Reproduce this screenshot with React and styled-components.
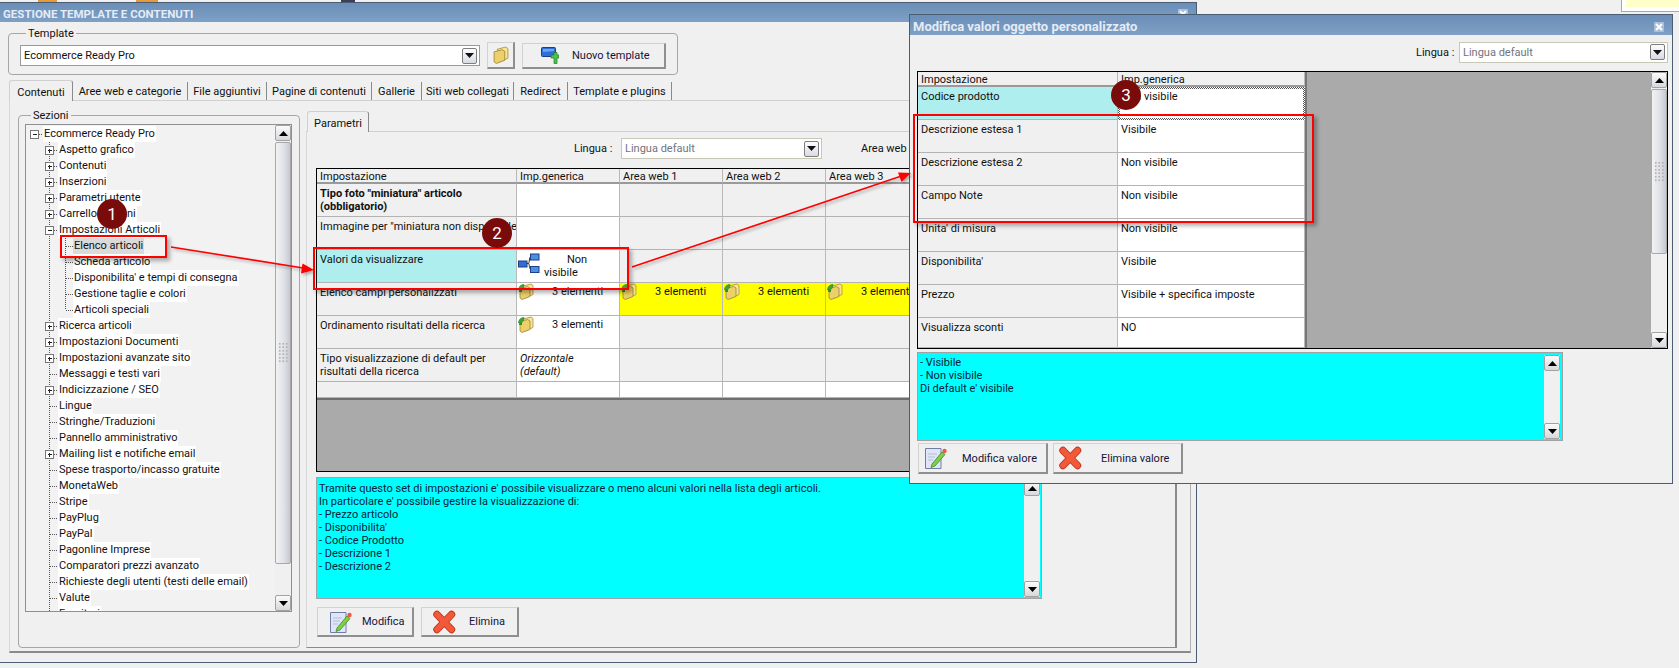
import React from "react";
import styled, { createGlobalStyle } from "styled-components";

const Global = createGlobalStyle`
  html, body { margin: 0; padding: 0; background: #f0f0f0; overflow: hidden; }
  #root { width: 1679px; height: 668px; }
  * { box-sizing: border-box; }
`;

const FONT = `Roboto, "Liberation Sans", Arial, sans-serif`;

const Desktop = styled.div`
  position: relative; width: 1679px; height: 668px; overflow: hidden;
  background: #f0f0f0; color: #111; font: 11px/13px ${FONT};
`;
const TopBit = styled.div`
  position: absolute; top: 0; height: 2px; left: ${p => p.$x}px; width: ${p => p.$w}px; background: ${p => p.$c};
`;
const NoteCorner = styled.div`
  position: absolute; left: 1621px; top: -1px; width: 60px; height: 13px;
  background: #fff; border: 1px solid #a8a8a8; padding: 0 0 4px 4px;
`;
const NoteFill = styled.div` height: 100%; background: #ffffc8; `;

const Window = styled.section`
  position: absolute; display: flex; flex-direction: column;
  left: ${p => p.$x}px; top: ${p => p.$y}px; width: ${p => p.$w}px; height: ${p => p.$h}px;
  background: #f0f0f0; border: 1px solid #4b5d72;
`;
const TitleBar = styled.header`
  flex: none; display: flex; align-items: center; justify-content: space-between;
  height: ${p => p.$h}px; padding: ${p => p.$pt}px ${p => p.$pr}px 0 ${p => p.$pl}px;
  background: linear-gradient(#6a8eb7, #7fa0c6); color: #e4ecf6; font-weight: bold;
  font-size: ${p => p.$size}px; white-space: nowrap;
`;
const CloseBox = styled.span`
  display: flex; align-items: center; justify-content: center; width: 10px; height: 10px;
  background: #a9bfd9; color: #fff;
`;

const Fieldset = styled.fieldset`
  margin: 0; min-width: 0; border: 1px solid #a6a6a6; border-radius: 4px;
`;
const Legend = styled.legend` padding: 0 2px; margin-left: 6px; line-height: 13px; `;

const TemplateBox = styled(Fieldset)`
  flex: none; display: flex; align-items: center; gap: 7px;
  margin: 5px 0 0 8px; width: 670px; height: 48px; padding: 2px 0 5px 11px;
`;
const Combo = styled.div`
  flex: none; display: flex; align-items: center; justify-content: space-between;
  width: ${p => p.$w}px; height: ${p => p.$h}px; padding: 0 2px 0 ${p => p.$pl || 3}px;
  background: #fff; border: 1px solid ${p => p.$muted ? "#c8c8b8" : "#9a9a9a"};
  color: ${p => p.$muted ? "#6f7480" : "#111"};
`;
const ComboArrow = styled.span`
  display: flex; align-items: center; justify-content: center; width: 15px; height: 16px;
  background: linear-gradient(#fdfdfd, #d9dbe2); border: 1px solid #7d7d7d; border-radius: 2px; color: #111;
`;
const ToolButton = styled.button`
  flex: none; display: flex; align-items: center; margin: 0;
  width: ${p => p.$w}px; height: ${p => p.$h}px; padding: 0 0 0 ${p => p.$pl}px; gap: ${p => p.$gap}px;
  font: inherit; color: #14143a; background: #f0f0f0;
  border: 1px solid; border-color: #d2d2d2 #8f8f8f #8f8f8f #d2d2d2; border-right-width: 2px; border-bottom-width: 2px;
`;
const Tabs = styled.nav`
  flex: none; display: flex; height: 20px; margin: ${p => p.$mt}px 0 0 ${p => p.$ml}px; position: relative; z-index: 1;
`;
const Tab = styled.div`
  flex: none; display: flex; align-items: center; justify-content: center; width: ${p => p.$w}px;
  height: ${p => p.$active ? 21 : 18}px; margin-top: ${p => p.$active ? 0 : 2}px;
  background: #f0f0f0; white-space: nowrap; padding-top: ${p => p.$active ? 3 : 1}px;
  border-right: 1px solid #8a8a8a;
  ${p => p.$active && `border-left: 1px solid #d0d0d0; border-top: 1px solid #d0d0d0; border-radius: 3px 3px 0 0;`}
`;
const TabPage = styled.div`
  flex: none; display: flex; align-items: flex-start; margin-left: 9px;
  width: 1182px; height: 553px; padding: 8px 0 0 8px;
  border: 1px solid; border-color: #d0d0d0 #b0b0b0 #8a8a8a #d8d8d8; border-bottom-width: 2px;
`;
const SectionBox = styled(Fieldset)`
  flex: none; width: 282px; height: 539px; padding: 2px 7px 0 6px; display: block;
`;
const TreeBox = styled.div`
  display: flex; width: 267px; height: 488px; border: 1px solid #8f8f8f; background: #f2f2f2;
`;
const TreeList = styled.div` flex: 1; min-width: 0; overflow: hidden; padding-top: 1px; `;
const TreeRowEl = styled.div` display: flex; align-items: center; height: 16px; white-space: nowrap; `;
const TreeLabel = styled.span`
  padding: 0 1px; line-height: 16px; background: ${p => p.$selected ? "#dadada" : "#fff"};
`;
const Gutter = styled.svg` flex: none; display: block; `;

const ScrollTrack = styled.div`
  flex: none; display: flex; flex-direction: column; width: 16px; background: #f0f0f0;
  margin: ${p => p.$m || "0"};
`;
const ScrollButton = styled.div`
  flex: none; display: flex; align-items: center; justify-content: center; height: 16px;
  background: linear-gradient(#fbfbfb, #d7d8dc); border: 1px solid #a2a2a2; border-radius: 2px; color: #000;
`;
const ScrollMiddle = styled.div` flex: 1; min-height: 0; padding-top: 1px; `;
const ScrollThumb = styled.div`
  display: flex; align-items: center; justify-content: center; height: ${p => p.$h}px;
  background: linear-gradient(90deg, #f3f3f5, #dfe0e6 60%, #c6c8d2);
  border: 1px solid #a8a8a8; border-radius: 2px;
`;
const Grip = styled.div`
  width: 10px; height: 22px; background-image: radial-gradient(#b4b4b4 0.8px, transparent 1px); background-size: 3.5px 3.5px;
`;

const RightColumn = styled.div` flex: none; width: 871px; margin: 2px 0 0 6px; `;
const Panel = styled.div`
  height: 517px; padding: 6px 0 0 9px; display: flex; flex-direction: column; align-items: flex-start;
  border: 1px solid; border-color: #d0d0d0 #8a8a8a #8a8a8a #d8d8d8; border-right-width: 2px;
`;
const LanguageRow = styled.div`
  flex: none; display: flex; align-items: center; white-space: nowrap;
  height: ${p => p.$h}px; margin: 0 0 ${p => p.$mb}px ${p => p.$ml}px;
`;
const LanguageLabel = styled.span` flex: none; width: ${p => p.$w}px; `;
const AreaLabel = styled.span` flex: none; margin-left: 39px; `;

const GridFrame = styled.div`
  flex: none; display: flex; flex-direction: ${p => p.$row ? "row" : "column"};
  width: ${p => p.$w}px; height: ${p => p.$h}px; overflow: hidden;
  background: #aaa; border: 1px solid #000;
`;
const GridBody = styled.div`
  flex: none; background: #f0f0f0;
  ${p => p.$ruled && `border-bottom: 2px solid #6e6e6e;`}
  ${p => p.$sideRule && `border-right: 2px solid #777; overflow: hidden; width: 389px;`}
`;
const GridVoid = styled.div` flex: 1; min-width: 0; background: #aaa; `;
const GridRow = styled.div`
  display: grid; grid-template-columns: ${p => p.$cols}; height: ${p => p.$h}px;
`;
const TONES = { plain: "#f0f0f0", white: "#fff", yellow: "#ffff00", aqua: "#aeeeee", head: "#f0f0f0" };
const Cell = styled.div`
  min-width: 0; overflow: hidden; padding: ${p => p.$tone === "head" ? "1px" : "3px"} 3px 0;
  background: ${p => TONES[p.$tone || "plain"]};
  border-right: 1px solid #b9b9b9; border-bottom: 1px solid #b4b4b4;
  ${p => p.$tone === "head" && `border-bottom: 2px solid #9a9a9a;`}
  ${p => p.$bold && `font-weight: bold;`}
  ${p => p.$italic && `font-style: italic;`}
  ${p => p.$nowrap && `white-space: nowrap;`}
`;
const FocusCell = styled(Cell)`
  padding: 1px 1px 0;
  border: 2px solid transparent;
  background: linear-gradient(#fff, #fff) padding-box,
    repeating-conic-gradient(#555 0 25%, #fff 0 50%) 0 0 / 2px 2px border-box;
`;
const IconCell = styled(Cell)` display: flex; padding: 0 0 0 1px; align-items: flex-start; `;
const CountText = styled.span` margin: 2px 0 0 18px; white-space: nowrap; `;
const TreeValue = styled.span` margin: 3px 0 0 4px; text-indent: 23px; `;

const InfoBox = styled.div`
  flex: none; display: flex; justify-content: space-between;
  width: ${p => p.$w}px; height: ${p => p.$h}px; margin-top: ${p => p.$mt}px;
  padding: ${p => p.$pt}px 0 0 2px; background: #00ffff; border: 1px solid #a2a2a2; color: #07223a;
`;
const InfoText = styled.div` white-space: pre-line; `;
const ButtonRow = styled.div`
  flex: none; display: flex; gap: ${p => p.$gap}px; margin: ${p => p.$m};
`;
const ModalBody = styled.div`
  flex: 1; display: flex; flex-direction: column; align-items: flex-start; padding: 7px 0 0 7px;
`;

const RedBox = styled.div`
  position: absolute; left: ${p => p.$x}px; top: ${p => p.$y}px; width: ${p => p.$w}px; height: ${p => p.$h}px;
  border: 2px solid #f00; box-shadow: 3px 3px 4px rgba(0,0,0,.3); pointer-events: none;
`;
const Badge = styled.div`
  position: absolute; left: ${p => p.$x - 15}px; top: ${p => p.$y - 15}px; width: 30px; height: 30px;
  display: flex; align-items: center; justify-content: center; border-radius: 50%;
  background: #7a0b0b; color: #fff; font: 17px/1 ${FONT};
`;
const Arrows = styled.svg` position: absolute; left: 0; top: 0; pointer-events: none; `;

const Tri = ({ up }) => (
  <svg width="9" height="5" viewBox="0 0 9 5"><path d={up ? "M4.5 0L9 5H0Z" : "M0 0H9L4.5 5Z"} fill="currentColor" /></svg>
);

const Scrollbar = ({ thumb, margin }) => (
  <ScrollTrack $m={margin}>
    <ScrollButton><Tri up /></ScrollButton>
    <ScrollMiddle>{thumb ? <ScrollThumb $h={thumb}><Grip /></ScrollThumb> : null}</ScrollMiddle>
    <ScrollButton><Tri /></ScrollButton>
  </ScrollTrack>
);

const FolderIcon = ({ leaf, size = 16 }) => (
  <svg width={size} height={size + 1} viewBox="0 0 16 17" style={{ flex: "none", display: "block" }}>
    <path d="M5 3L13 1L15 2.5V11.5L7 15Z" fill="#f6e694" stroke="#a98f3c" strokeWidth=".8" />
    <path d="M2 5.5L9.5 3.5L12 5V13.5L4 16.5L2 15Z" fill="#ecd06a" stroke="#a08436" strokeWidth=".8" />
    {leaf && <path d="M.5 7C.5 3.5 3 1.5 6 1.5C6 5 4 7.5 .5 7Z" fill="#3fa535" stroke="#1f7a1f" strokeWidth=".5" />}
    {leaf && <path d="M1 9C1 7 2 6 4 6V9Z" fill="#2f8f2f" />}
  </svg>
);
const NetworkIcon = () => (
  <svg width="22" height="20" viewBox="0 0 22 20" style={{ flex: "none", display: "block", marginTop: 3 }}>
    <path d="M9 10.5H10.5C11.5 10.5 11 3.5 13 3.5M10.5 10.5C11.5 10.5 11 16.5 13 16.5" fill="none" stroke="#223" strokeWidth="1" />
    <rect x=".5" y="8" width="8.5" height="6" fill="#2d6fd0" stroke="#1c3f88" />
    <rect x="12.5" y="1" width="8.5" height="6" fill="#4d8fe0" stroke="#1c3f88" />
    <rect x="12.5" y="13.5" width="8.5" height="6" fill="#4d8fe0" stroke="#1c3f88" />
  </svg>
);
const NoteIcon = () => (
  <svg width="24" height="24" viewBox="0 0 24 24" style={{ flex: "none", display: "block" }}>
    <path d="M1.5 2.5H17V22.5H1.5Z" fill="#dfe5f5" stroke="#6f7ea8" />
    <path d="M4 8H13M4 11H11M4 14H9" stroke="#b4bdd8" strokeWidth="1.2" />
    <path d="M8 18L18 6L21 8.5L11 20L7 21.5Z" fill="#7ccf47" stroke="#3f8a2c" strokeWidth=".8" />
    <circle cx="20.5" cy="5" r="2.2" fill="#ea5a45" />
  </svg>
);
const CrossIcon = () => (
  <svg width="24" height="24" viewBox="0 0 24 24" style={{ flex: "none", display: "block" }}>
    <path d="M5 4.5L19.5 19.5M19.5 4.5L5 19.5" stroke="#c23418" strokeWidth="7.4" strokeLinecap="round" />
    <path d="M5 4.5L19.5 19.5M19.5 4.5L5 19.5" stroke="#f1593a" strokeWidth="5.6" strokeLinecap="round" />
  </svg>
);
const NewTemplateIcon = () => (
  <svg width="18" height="17" viewBox="0 0 18 17" style={{ flex: "none", display: "block" }}>
    <rect x=".5" y=".5" width="14" height="9" rx="1" fill="#2f6fd8" stroke="#1c3f88" />
    <path d="M2 2H13V4L2 5Z" fill="#6fa4ee" />
    <path d="M10 8H13V5.5H16V8H18V11H16V16.5H13V11H10Z" fill="#4cc24a" stroke="#237d25" strokeWidth=".7" />
  </svg>
);
const CloseGlyph = () => (
  <svg width="8" height="8" viewBox="0 0 8 8"><path d="M1 1L7 7M7 1L1 7" stroke="currentColor" strokeWidth="2" /></svg>
);

const TreeRow = ({ level = 1, kind = "leaf", last, selected, children }) => {
  const w = [17, 32, 47][level];
  const dash = { stroke: "#555", strokeWidth: 1, strokeDasharray: "1 1", shapeRendering: "crispEdges" };
  const cx = level === 0 ? 8.5 : 23.5;
  return (
    <TreeRowEl>
      <Gutter width={w} height="16" viewBox={`0 0 ${w} 16`}>
        {level >= 1 && <path d="M23.5 0V16" {...dash} />}
        {level === 2 && <path d={`M39.5 0V${last ? 8 : 16}M40 8.5H47`} {...dash} />}
        {level < 2 && <path d={`M${cx} 8.5H${w}`} {...dash} />}
        {kind !== "leaf" && (
          <g shapeRendering="crispEdges">
            <rect x={cx - 4} y="4.5" width="8" height="8" fill="#fff" stroke="#777" />
            <path d={`M${cx - 2} 8.5H${cx + 2}`} stroke="#222" />
            {kind === "plus" && <path d={`M${cx} 6.5V10.5`} stroke="#222" />}
          </g>
        )}
      </Gutter>
      <TreeLabel $selected={selected}>{children}</TreeLabel>
    </TreeRowEl>
  );
};

const TREE = [
  ["Aspetto grafico", "plus"], ["Contenuti", "plus"], ["Inserzioni", "plus"], ["Parametri utente", "plus"],
  ["Carrello e ordini", "plus"], ["Impostazioni Articoli", "minus"],
  ["Elenco articoli", "leaf", 2, true], ["Scheda articolo", "leaf", 2], ["Disponibilita' e tempi di consegna", "leaf", 2],
  ["Gestione taglie e colori", "leaf", 2], ["Articoli speciali", "leaf", 2, false, true],
  ["Ricerca articoli", "plus"], ["Impostazioni Documenti", "plus"], ["Impostazioni avanzate sito", "plus"],
  ["Messaggi e testi vari"], ["Indicizzazione / SEO", "plus"], ["Lingue"], ["Stringhe/Traduzioni"],
  ["Pannello amministrativo"], ["Mailing list e notifiche email", "plus"], ["Spese trasporto/incasso gratuite"],
  ["MonetaWeb"], ["Stripe"], ["PayPlug"], ["PayPal"], ["Pagonline Imprese"], ["Comparatori prezzi avanzato"],
  ["Richieste degli utenti (testi delle email)"], ["Valute"], ["Fornitori"],
];

const MAIN_COLS = "200px 103px 103px 103px 103px 103px";
const Counted = ({ tone }) => (
  <IconCell $tone={tone}><FolderIcon leaf /><CountText>3 elementi</CountText></IconCell>
);

const MainGrid = () => (
  <GridFrame $w={726} $h={304}>
    <GridBody $ruled>
      <GridRow $cols={MAIN_COLS} $h={15}>
        {["Impostazione", "Imp.generica", "Area web 1", "Area web 2", "Area web 3", "Area web 4"].map(t => <Cell key={t} $tone="head">{t}</Cell>)}
      </GridRow>
      <GridRow $cols={MAIN_COLS} $h={33}>
        <Cell $bold>Tipo foto "miniatura" articolo (obbligatorio)</Cell><Cell $tone="white" /><Cell /><Cell /><Cell /><Cell />
      </GridRow>
      <GridRow $cols={MAIN_COLS} $h={33}>
        <Cell $nowrap>Immagine per "miniatura non disponibile"</Cell><Cell $tone="white" /><Cell /><Cell /><Cell /><Cell />
      </GridRow>
      <GridRow $cols={MAIN_COLS} $h={33}>
        <Cell $tone="aqua">Valori da visualizzare</Cell>
        <IconCell $tone="white"><NetworkIcon /><TreeValue>Non<br />visibile</TreeValue></IconCell>
        <Cell /><Cell /><Cell /><Cell />
      </GridRow>
      <GridRow $cols={MAIN_COLS} $h={33}>
        <Cell>Elenco campi personalizzati</Cell>
        <Counted tone="white" /><Counted tone="yellow" /><Counted tone="yellow" /><Counted tone="yellow" /><Counted tone="yellow" />
      </GridRow>
      <GridRow $cols={MAIN_COLS} $h={33}>
        <Cell>Ordinamento risultati della ricerca</Cell><Counted tone="white" /><Cell /><Cell /><Cell /><Cell />
      </GridRow>
      <GridRow $cols={MAIN_COLS} $h={33}>
        <Cell>Tipo visualizzazione di default per risultati della ricerca</Cell>
        <Cell $tone="white" $italic>Orizzontale (default)</Cell><Cell /><Cell /><Cell /><Cell />
      </GridRow>
      <GridRow $cols={MAIN_COLS} $h={16}>
        <Cell /><Cell $tone="white" /><Cell $tone="white" /><Cell $tone="white" /><Cell $tone="white" /><Cell $tone="white" />
      </GridRow>
    </GridBody>
    <GridVoid />
  </GridFrame>
);

const MODAL_COLS = "200px 187px";
const MODAL_ROWS = [
  ["Descrizione estesa 1", "Visibile"], ["Descrizione estesa 2", "Non visibile"], ["Campo Note", "Non visibile"],
  ["Unita' di misura", "Non visibile"], ["Disponibilita'", "Visibile"], ["Prezzo", "Visibile + specifica imposte"],
];

const ModalGrid = () => (
  <GridFrame $row $w={751} $h={278}>
    <GridBody $sideRule>
      <GridRow $cols={MODAL_COLS} $h={15}><Cell $tone="head">Impostazione</Cell><Cell $tone="head">Imp.generica</Cell></GridRow>
      <GridRow $cols={MODAL_COLS} $h={33}><Cell $tone="aqua">Codice prodotto</Cell><FocusCell $tone="white">Non visibile</FocusCell></GridRow>
      {MODAL_ROWS.map(([a, b]) => (
        <GridRow key={a} $cols={MODAL_COLS} $h={33}><Cell>{a}</Cell><Cell $tone="white">{b}</Cell></GridRow>
      ))}
      <GridRow $cols={MODAL_COLS} $h={30}><Cell>Visualizza sconti</Cell><Cell $tone="white">NO</Cell></GridRow>
    </GridBody>
    <GridVoid />
    <Scrollbar thumb={165} />
  </GridFrame>
);

export default function App() {
  return (
    <Desktop>
      <Global />
      <TopBit $x={38} $w={19} $c="#e79a3c" />
      <TopBit $x={136} $w={22} $c="#e79a3c" />
      <TopBit $x={341} $w={14} $c="#3b3f55" />
      <NoteCorner><NoteFill /></NoteCorner>

      <Window $x={-1} $y={2} $w={1198} $h={661}>
        <TitleBar $h={19} $pt={3} $pl={3} $pr={8} $size={11.5}>
          GESTIONE TEMPLATE E CONTENUTI
          <CloseBox><CloseGlyph /></CloseBox>
        </TitleBar>
        <TemplateBox>
          <Legend>Template</Legend>
          <Combo $w={460} $h={21}>Ecommerce Ready Pro<ComboArrow><Tri /></ComboArrow></Combo>
          <ToolButton $w={28} $h={27} $pl={4} $gap={0}><FolderIcon size={17} /></ToolButton>
          <ToolButton $w={144} $h={26} $pl={18} $gap={13}><NewTemplateIcon />Nuovo template</ToolButton>
        </TemplateBox>
        <Tabs $mt={5} $ml={9}>
          <Tab $active $w={64}>Contenuti</Tab>
          <Tab $w={115}>Aree web e categorie</Tab>
          <Tab $w={79}>File aggiuntivi</Tab>
          <Tab $w={105}>Pagine di contenuti</Tab>
          <Tab $w={50}>Gallerie</Tab>
          <Tab $w={92}>Siti web collegati</Tab>
          <Tab $w={54}>Redirect</Tab>
          <Tab $w={104}>Template e plugins</Tab>
        </Tabs>
        <TabPage>
          <SectionBox>
            <Legend>Sezioni</Legend>
            <TreeBox>
              <TreeList>
                <TreeRow level={0} kind="minus">Ecommerce Ready Pro</TreeRow>
                {TREE.map(([t, kind, level, sel, last]) => (
                  <TreeRow key={t} level={level || 1} kind={kind || "leaf"} selected={sel} last={last}>{t}</TreeRow>
                ))}
              </TreeList>
              <Scrollbar thumb={422} />
            </TreeBox>
          </SectionBox>
          <RightColumn>
            <Tabs $mt={0} $ml={1}><Tab $active $w={62}>Parametri</Tab></Tabs>
            <Panel>
              <LanguageRow $h={21} $mb={9} $ml={258}>
                <LanguageLabel $w={47}>Lingua :</LanguageLabel>
                <Combo $muted $w={201} $h={21}>Lingua default<ComboArrow><Tri /></ComboArrow></Combo>
                <AreaLabel>Area web :</AreaLabel>
              </LanguageRow>
              <MainGrid />
              <InfoBox $w={726} $h={122} $mt={5} $pt={4}>
                <InfoText>{`Tramite questo set di impostazioni e' possibile visualizzare o meno alcuni valori nella lista degli articoli.
In particolare e' possibile gestire la visualizzazione di:
- Prezzo articolo
- Disponibilita'
- Codice Prodotto
- Descrizione 1
- Descrizione 2`}</InfoText>
                <Scrollbar margin="-2px 1px 1px 0" />
              </InfoBox>
              <ButtonRow $gap={7} $m="8px 0 0 1px">
                <ToolButton $w={97} $h={30} $pl={11} $gap={9}><NoteIcon />Modifica</ToolButton>
                <ToolButton $w={98} $h={30} $pl={10} $gap={13}><CrossIcon />Elimina</ToolButton>
              </ButtonRow>
            </Panel>
          </RightColumn>
        </TabPage>
      </Window>

      <Window $x={909} $y={14} $w={764} $h={470}>
        <TitleBar $h={20} $pt={3} $pl={3} $pr={8} $size={13}>
          Modifica valori oggetto personalizzato
          <CloseBox><CloseGlyph /></CloseBox>
        </TitleBar>
        <ModalBody>
          <LanguageRow $h={20} $mb={9} $ml={499}>
            <LanguageLabel $w={43}>Lingua :</LanguageLabel>
            <Combo $muted $w={209} $h={21}>Lingua default<ComboArrow><Tri /></ComboArrow></Combo>
          </LanguageRow>
          <ModalGrid />
          <InfoBox $w={646} $h={89} $mt={3} $pt={3}>
            <InfoText>{`- Visibile
- Non visibile
Di default e' visibile`}</InfoText>
            <Scrollbar margin="-1px 2px 1px 0" />
          </InfoBox>
          <ButtonRow $gap={5} $m="2px 0 0 1px">
            <ToolButton $w={130} $h={31} $pl={5} $gap={14}><NoteIcon />Modifica valore</ToolButton>
            <ToolButton $w={130} $h={31} $pl={4} $gap={19}><CrossIcon />Elimina valore</ToolButton>
          </ButtonRow>
        </ModalBody>
      </Window>

      <Arrows width="1679" height="668" viewBox="0 0 1679 668">
        <defs>
          <filter id="soft" x="-10%" y="-40%" width="120%" height="200%">
            <feDropShadow dx="2" dy="2" stdDeviation="1.5" floodColor="#000" floodOpacity=".3" />
          </filter>
        </defs>
        <g filter="url(#soft)">
          <path d="M171 247L303 268" stroke="#f00" strokeWidth="1.6" fill="none" />
          <path d="M314 270L301 273.5L302.5 263.5Z" fill="#f00" />
          <path d="M632 267L900 176.5" stroke="#f00" strokeWidth="1.6" fill="none" />
          <path d="M911 173L901.5 182L898 172.5Z" fill="#f00" />
        </g>
      </Arrows>
      <RedBox $x={60} $y={235} $w={107} $h={23} />
      <RedBox $x={313} $y={247} $w={316} $h={43} />
      <RedBox $x={913} $y={114} $w={401} $h={109} />
      <Badge $x={112} $y={214}>1</Badge>
      <Badge $x={497} $y={233}>2</Badge>
      <Badge $x={1126} $y={95}>3</Badge>
    </Desktop>
  );
}
